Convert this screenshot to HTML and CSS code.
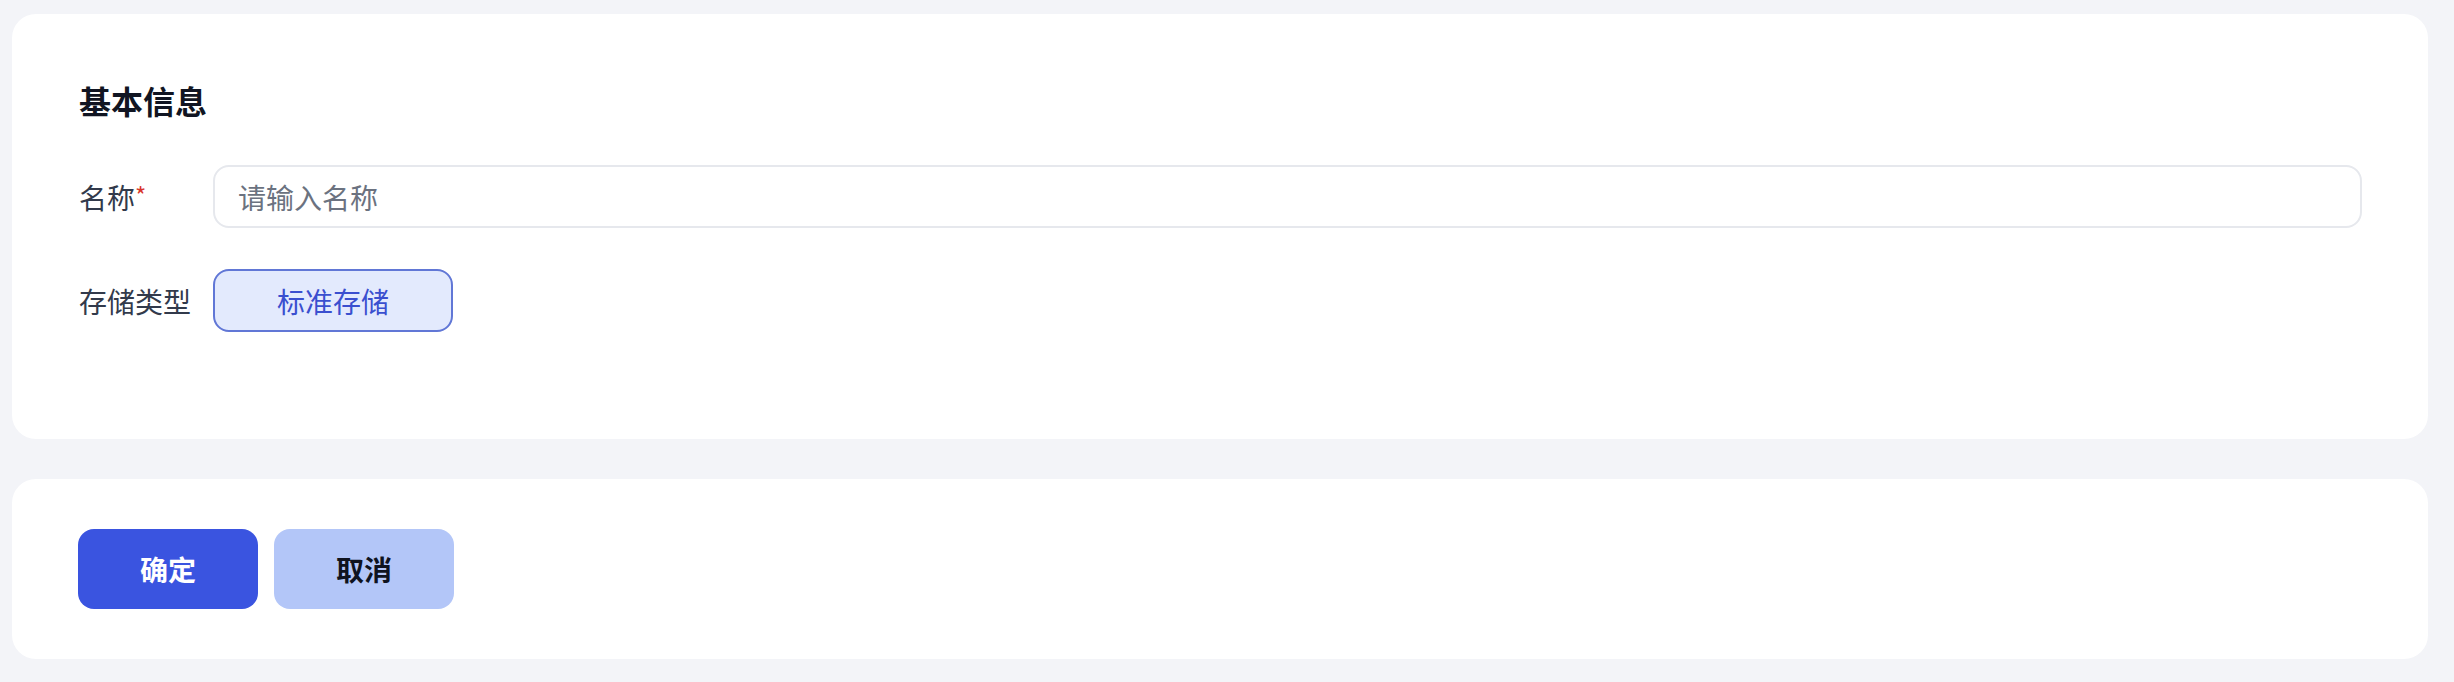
FILE: index.html
```html
<!DOCTYPE html>
<html lang="zh">
<head>
<meta charset="utf-8">
<title>基本信息</title>
<link rel="stylesheet" href="styles.css">
</head>
<body>
<div class="page">
  <section class="card info">
    <h2 class="title">基本信息</h2>
    <div class="row">
      <label class="label">名称<span class="req">*</span></label>
      <input class="input" type="text" placeholder="请输入名称">
    </div>
    <div class="row row-gap">
      <span class="label">存储类型</span>
      <button class="option selected" type="button">标准存储</button>
    </div>
  </section>
  <section class="card actions">
    <button class="btn btn-primary" type="button">确定</button>
    <button class="btn btn-secondary" type="button">取消</button>
  </section>
</div>
</body>
</html>
```

FILE: styles.css
```css
html, body {
  margin: 0;
  padding: 0;
  background: #f3f4f8;
}
body {
  font-family: "Noto Sans CJK SC", "Noto Sans", sans-serif;
  color: #2f3646;
}
.page {
  padding: 14px 26px 23px 12px;
  display: flex;
  flex-direction: column;
  gap: 40px;
}
.card {
  background: #ffffff;
  border-radius: 24px;
}
.info {
  padding: 64px 66px 107px 67px;
}
.title {
  margin: 0 0 43px 0;
  font-size: 32px;
  line-height: 44px;
  font-weight: 700;
  color: #111522;
}
.row {
  display: flex;
  align-items: center;
}
.row-gap {
  margin-top: 41px;
}
.label {
  width: 134px;
  flex: none;
  font-size: 28px;
  line-height: 40px;
  color: #323a4b;
}
.req {
  color: #d9352b;
  font-size: 24px;
  vertical-align: top;
  position: relative;
  top: -2px;
}
.input {
  flex: 1;
  box-sizing: border-box;
  height: 63px;
  border: 2px solid #e6e8ed;
  border-radius: 16px;
  padding: 0 23px;
  font-family: inherit;
  font-size: 28px;
  color: #2f3646;
  background: #fff;
  outline: none;
}
.input::placeholder {
  color: #6b7280;
}
.option {
  box-sizing: border-box;
  width: 240px;
  height: 63px;
  border-radius: 16px;
  font-family: inherit;
  font-size: 28px;
  padding: 0;
  cursor: pointer;
}
.selected {
  background: #e3eafd;
  border: 2px solid #6177d6;
  color: #3a4fcf;
}
.actions {
  padding: 50px 66px;
  display: flex;
  gap: 16px;
}
.btn {
  width: 180px;
  height: 80px;
  border: none;
  border-radius: 16px;
  font-family: inherit;
  font-size: 28px;
  font-weight: 700;
  padding: 0;
  cursor: pointer;
}
.btn-primary {
  background: #3a54e0;
  color: #ffffff;
}
.btn-secondary {
  background: #b3c6f8;
  color: #0f1320;
}
```
